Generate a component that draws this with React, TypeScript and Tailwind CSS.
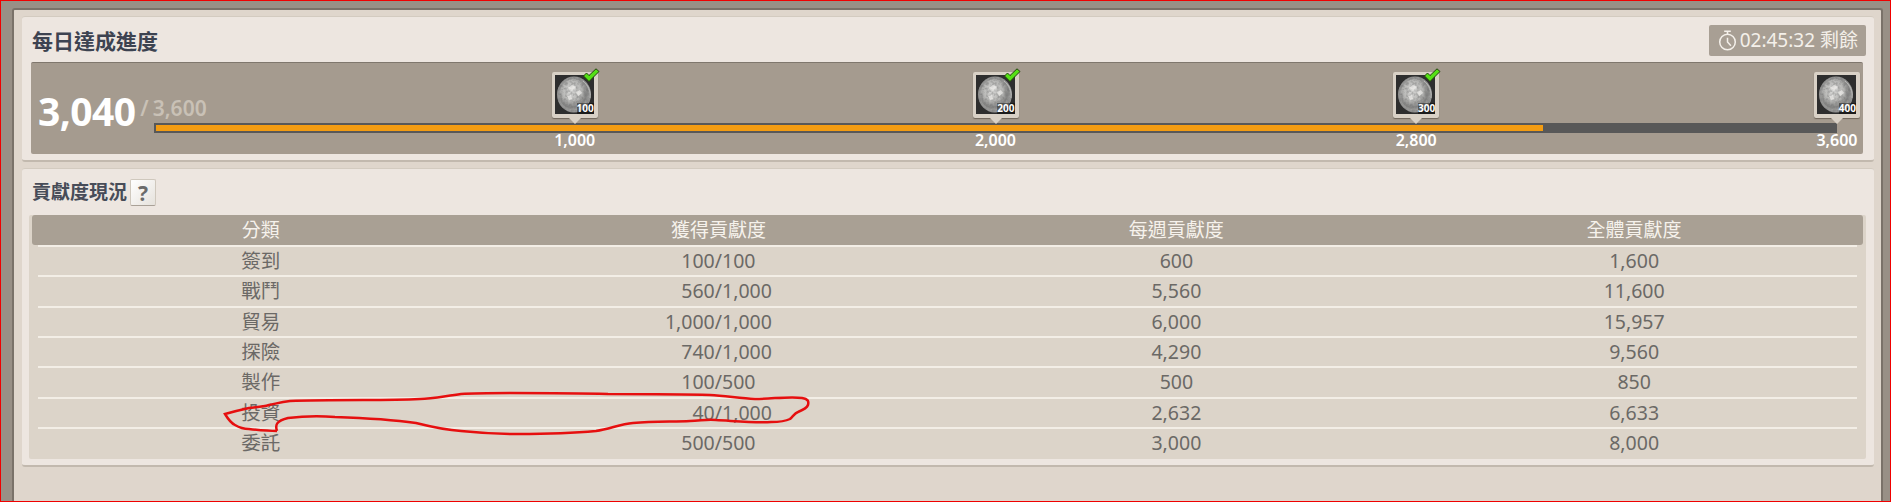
import React from 'react';

const milestones = [
  { label: '1,000', reward: '100', done: true },
  { label: '2,000', reward: '200', done: true },
  { label: '2,800', reward: '300', done: true },
  { label: '3,600', reward: '400', done: false },
];

const rows = [
  { name: '簽到', got: '100', max: '100', week: '600', total: '1,600' },
  { name: '戰鬥', got: '560', max: '1,000', week: '5,560', total: '11,600' },
  { name: '貿易', got: '1,000', max: '1,000', week: '6,000', total: '15,957' },
  { name: '探險', got: '740', max: '1,000', week: '4,290', total: '9,560' },
  { name: '製作', got: '100', max: '500', week: '500', total: '850' },
  { name: '投資', got: '40', max: '1,000', week: '2,632', total: '6,633' },
  { name: '委託', got: '500', max: '500', week: '3,000', total: '8,000' },
];

const Coin = ({ id }: { id: string }) => (
  <svg viewBox="0 0 39 39" className="block w-[39px] h-[39px]">
    <defs>
      <radialGradient id={id} cx="42%" cy="38%" r="62%">
        <stop offset="0%" stopColor="#dededc" />
        <stop offset="55%" stopColor="#b4b4b2" />
        <stop offset="85%" stopColor="#838382" />
        <stop offset="100%" stopColor="#a2a2a0" />
      </radialGradient>
      <filter id={`${id}n`} x="0" y="0" width="100%" height="100%">
        <feTurbulence type="fractalNoise" baseFrequency="0.38" numOctaves="2" seed="4" />
        <feColorMatrix values="0 0 0 0 0.15  0 0 0 0 0.15  0 0 0 0 0.15  1.1 0 0 0 -0.42" />
        <feComposite in2="SourceAlpha" operator="in" />
      </filter>
    </defs>
    <rect width="39" height="39" fill="#2e2e2e" />
    <ellipse cx="19" cy="19.5" rx="17" ry="18" fill="#959594" />
    <ellipse cx="19" cy="19.5" rx="14.8" ry="15.5" fill={`url(#${id})`} />
    <ellipse cx="19" cy="19.5" rx="17" ry="18" fill="#000" filter={`url(#${id}n)`} />
    <path d="M13 13l4-3 4 2-3 3zM21 17l4-2 2 3-4 3zM12 21l4-1 1 4-3 1z" fill="#efeeeb" opacity="0.75" />
    <path d="M28 6c5 4 8 10 7 17" fill="none" stroke="#c4c4c2" strokeWidth="0.8" />
  </svg>
);

const Check = () => (
  <svg viewBox="0 0 18 15" className="absolute -top-[4px] -right-[2px] w-[18px] h-[15px]">
    <path d="M1.5 8 L4.5 5 L7 7.5 L14 0.8 L17 3.5 L7 13.5 Z" fill="#55e016" stroke="#24400f" strokeWidth="1" />
  </svg>
);

const Stopwatch = () => (
  <svg viewBox="0 0 20 22" className="w-[19px] h-[21px]" fill="none" stroke="#f4f0ea" strokeWidth="1.6">
    <circle cx="10" cy="12.5" r="8.2" />
    <path d="M6.5 1.2h7M10 1.2v3M10 8v4.5l3.6 4" />
  </svg>
);

const Milestone = ({ m, i }: { m: (typeof milestones)[number]; i: number }) => (
  <div className="flex justify-end">
    <div className="relative w-[46px] h-[46px] translate-x-1/2 bg-[#d9d1c6] p-[3px] rounded-[2px] shadow-[0_1px_1px_rgba(60,50,40,0.5)]">
      <Coin id={`coin${i}`} />
      <span className="absolute right-[4px] bottom-[4px] text-[10px] leading-[11px] font-bold text-white bg-black/40">{m.reward}</span>
      {m.done && <Check />}
      <div className="absolute left-1/2 -translate-x-1/2 top-full w-0 h-0 border-x-[6px] border-x-transparent border-t-[6px] border-t-[#d9d1c6]" />
    </div>
  </div>
);

const App = () => {
  return (
    <div className="relative w-[1891px] h-[502px] overflow-hidden border border-[#f00000] bg-[#989086] pt-[7px] pl-[11px] pr-[7px] font-['Noto_Sans','Noto_Sans_CJK_TC',sans-serif]">
      <div className="h-[600px] border-x-2 border-t-2 border-[#7a7269] rounded-t-[3px] bg-[#dfd6cc] pt-[6px] pl-[8px] pr-[7px]">
        <div className="h-[146px] bg-[#ede6e0] rounded-[3px] border-t border-[#d3cbc0] border-b-2 border-b-[#c2b9ae] pt-[8px] pl-[9px] pr-[11px]">
          <div className="flex justify-between items-start h-[37px]">
            <h1 className="pl-[1px] pt-[2px] text-[21px] leading-[29px] font-bold text-[#3d4351]">每日達成進度</h1>
            <div className="-mr-[3px] flex items-center gap-[3px] h-[31px] pl-[9px] pr-[8px] rounded-[2px] bg-[#a89f94] text-[19px] leading-[31px] text-[#f4f0ea]">
              <Stopwatch />
              <span>02:45:32 剩餘</span>
            </div>
          </div>
          <div className="flex h-[92px] bg-[#a59b8f] rounded-[2px] border-t border-[#7f776d]">
            <div className="w-[123px] shrink-0 pl-[7px] pt-[23px] whitespace-nowrap">
              <span className="text-[39px] leading-[50px] font-bold tracking-[-0.6px] text-white">3,040</span>
              <span className="ml-[5px] text-[21px] text-[#c9c1b6] font-semibold align-[10px]">/<span className="ml-[4px]">3,600</span></span>
            </div>
            <div className="flex-1 pt-[9px] pr-[26px]">
              <div className="grid grid-cols-4 h-[51px]">
                {milestones.map((m, i) => (
                  <Milestone key={m.label} m={m} i={i} />
                ))}
              </div>
              <div className="h-[10px] bg-[#585858] border-y-2 border-l-2 border-[#585858]">
                <div className="h-full w-[82.5%] bg-[#f39c12]" />
              </div>
              <div className="grid grid-cols-4 mt-[-5px]">
                {milestones.map(m => (
                  <div key={m.label} className="flex justify-end">
                    <span className="w-[60px] translate-x-1/2 text-center text-[16px] leading-[24px] font-semibold text-white">{m.label}</span>
                  </div>
                ))}
              </div>
            </div>
          </div>
        </div>

        <div className="mt-[6px] h-[299px] bg-[#ede6e0] rounded-[3px] border-t border-[#d3cbc0] border-b-2 border-b-[#c2b9ae] pt-[10px] pl-[7px] pr-[8px]">
          <div className="flex items-center gap-[3px] h-[27px] mb-[9px] pl-[3px]">
            <h2 className="text-[19px] leading-[27px] font-bold text-[#474c58]">貢獻度現況</h2>
            <button className="w-[26px] h-[27px] rounded-[2px] border border-[#cfc8bd] border-b-[#a9a197] bg-gradient-to-br from-white to-[#e6e2dc] text-[21px] leading-[24px] font-bold text-[#6b6b6b]">?</button>
          </div>
          <div className="h-[244px] bg-[#dcd4c9] rounded-[2px]">
            <div className="grid grid-cols-4 mx-[3px] h-[30px] rounded-[3px] bg-[#a9a094] text-center text-[19px] leading-[30px] text-[#f6f2ec]">
              <div>分類</div>
              <div>獲得貢獻度</div>
              <div>每週貢獻度</div>
              <div>全體貢獻度</div>
            </div>
            {rows.map(r => (
              <div key={r.name}>
                <div className="mx-[9px] h-[2px] bg-[#f3eee6]" />
                <div className="grid grid-cols-4 mx-[3px] h-[28.33px] text-center text-[19.5px] leading-[28px] text-[#6b6966]">
                  <div>{r.name}</div>
                  <div className="flex">
                    <span className="w-[225px] text-right">{r.got}</span>
                    <span>/{r.max}</span>
                  </div>
                  <div>{r.week}</div>
                  <div>{r.total}</div>
                </div>
              </div>
            ))}
          </div>
        </div>
      </div>

      {/* red pen scribble over the 投資 row */}
      <svg className="absolute left-[-1px] top-[-1px] pointer-events-none" width="1891" height="502" fill="none">
        <path
          d="M277 431 C275 425 276 421 288 418 C305 416 320 416 335 417 C365 418 395 420 416 423 C432 427 445 430 461 431 C480 433 500 434 518 434 C545 434 575 433 596 431 C610 429 620 424 633 423 C655 421 675 422 690 421 C700 421 706 419 716 420 C735 421 755 423 771 422 C780 422 786 421 790 419 C794 415 795 413 798 412 C803 410 807 408 808 405 C809 401 808 399 802 398 C790 396 772 399 755 399 C740 398 725 396 710 395 C680 394 645 394 608 394 C575 393 540 393 510 393 C490 393 475 393 461 394 C445 396 432 399 420 399 C400 400 382 400 363 400 C340 400 312 400 290 401 C280 402 275 404 269 405 C262 407 256 407 249 408 C240 410 232 412 225 414 C228 419 231 423 235 425 C240 428 244 429 249 429 C258 430 268 431 277 431"
          stroke="#e60f0f"
          strokeWidth="2.5"
        />
      </svg>
    </div>
  );
};

export default App;
